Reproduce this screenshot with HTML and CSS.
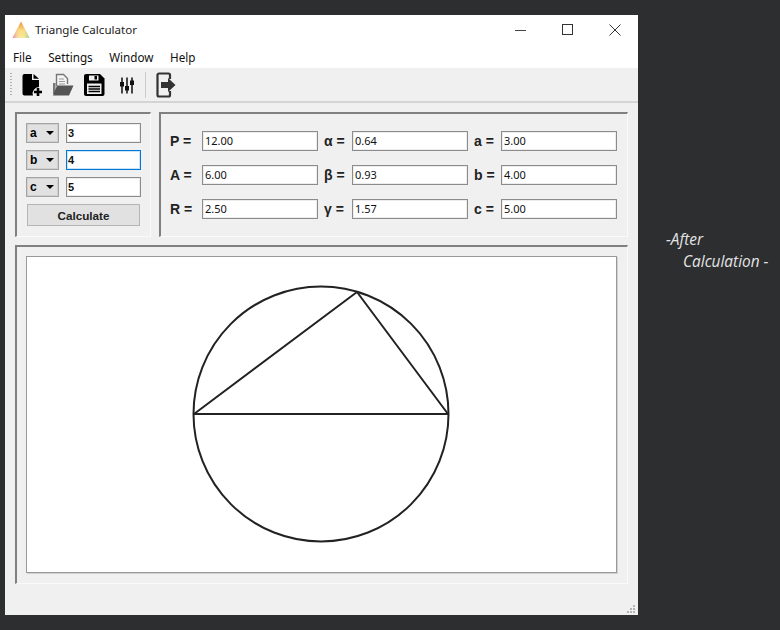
FILE: index.html
```html
<!DOCTYPE html>
<html>
<head>
<title>Triangle Calculator</title>
<meta charset="utf-8">
<link rel="stylesheet" href="styles.css">
</head>
<body>

<div class="window">

    <div class="titlebar">
        <svg class="logo" width="18" height="18" viewBox="0 0 18 18">
            <defs>
                <linearGradient id="logoA" x1="0" y1="0" x2="0" y2="1">
                    <stop offset="0" stop-color="#e8903c"/>
                    <stop offset="0.55" stop-color="#fbdc80"/>
                    <stop offset="1" stop-color="#fbe8a0"/>
                </linearGradient>
                <linearGradient id="logoB" x1="0" y1="0" x2="1" y2="0">
                    <stop offset="0" stop-color="#e070c8" stop-opacity="0.9"/>
                    <stop offset="0.45" stop-color="#fbdc80" stop-opacity="0"/>
                    <stop offset="0.6" stop-color="#fbdc80" stop-opacity="0"/>
                    <stop offset="1" stop-color="#70d0a0" stop-opacity="0.9"/>
                </linearGradient>
            </defs>
            <polygon points="9,0.5 17.5,17 0.5,17" fill="url(#logoA)"/>
            <polygon points="9,0.5 17.5,17 0.5,17" fill="url(#logoB)"/>
        </svg>
        <span class="title">Triangle Calculator</span>
        <div class="winbuttons">
            <svg width="12" height="12" viewBox="0 0 12 12"><path d="M0 6.5H11" stroke="#444" stroke-width="1"/></svg>
            <svg width="12" height="12" viewBox="0 0 12 12"><rect x="0.5" y="0.5" width="10" height="10" fill="none" stroke="#333" stroke-width="1"/></svg>
            <svg width="12" height="12" viewBox="0 0 12 12"><path d="M0.5 0.5L11.5 11.5M11.5 0.5L0.5 11.5" stroke="#333" stroke-width="1"/></svg>
        </div>
    </div>

    <div class="menubar">
        <span>File</span>
        <span>Settings</span>
        <span>Window</span>
        <span>Help</span>
    </div>

    <div class="toolbar">
        <div class="grip"></div>
        <svg class="tool" width="22" height="24" viewBox="0 0 22 24">
            <path d="M3.5 1H11V7H18V14A6.5 6.5 0 0 0 12 22.5H3.5A2 2 0 0 1 1.5 20.5V3A2 2 0 0 1 3.5 1Z" fill="#000"/>
            <path d="M12.5 1L18 5.7H12.5Z" fill="#000"/>
            <path d="M17 15V23M13 19H21" stroke="#000" stroke-width="2.6"/>
        </svg>
        <svg class="tool" width="22" height="24" viewBox="0 0 22 24">
            <path d="M4.5 13V1.5H11.5L15.5 5.5V11" fill="#f4f4f4" stroke="#777" stroke-width="1.4"/>
            <path d="M7 6H12M7 8.5H13M7 11H13" stroke="#999" stroke-width="1"/>
            <path d="M1 10H3.5V21H1Z" fill="#777"/>
            <path d="M5 12.5H21.5L17 22.5H1Z" fill="#555"/>
        </svg>
        <svg class="tool" width="22" height="24" viewBox="0 0 22 24">
            <path d="M1 3A2 2 0 0 1 3 1H17L21.5 5.5V21A2 2 0 0 1 19.5 23H3A2 2 0 0 1 1 21Z" fill="#000"/>
            <rect x="6" y="2.5" width="9.5" height="5" fill="#f0f0f0"/>
            <rect x="11.5" y="3" width="2.5" height="3.5" fill="#000"/>
            <rect x="4" y="10.5" width="14.5" height="10.5" fill="#f0f0f0"/>
            <path d="M5.5 13.5H17M5.5 16H17M5.5 18.5H17" stroke="#000" stroke-width="1.4"/>
        </svg>
        <svg class="tool sliders" width="16" height="24" viewBox="0 0 16 24">
            <path d="M3 4.5V20.5M8 4.5V20.5M13 4.5V20.5" stroke="#333" stroke-width="1.8"/>
            <path d="M1 9H5V13.5H1ZM6 13H10V17.5H6ZM11 7.5H15V12H11Z" fill="#111"/>
        </svg>
        <div class="toolsep"></div>
        <svg class="tool" width="23" height="26" viewBox="0 0 23 26">
            <path d="M15 7V3A1.5 1.5 0 0 0 13.5 1.5H4A1.5 1.5 0 0 0 2.5 3V23A1.5 1.5 0 0 0 4 24.5H13.5A1.5 1.5 0 0 0 15 23V19" fill="none" stroke="#333" stroke-width="2.2"/>
            <path d="M6 10H13V6L20.5 13L13 20V16H6Z" fill="#333"/>
        </svg>
    </div>

    <div class="content">
        <div class="toprow">
            <div class="group inputs">
                <div class="inputrow">
                    <div class="select"><b>a</b><i class="arrow"></i></div>
                    <div class="field">3</div>
                </div>
                <div class="inputrow">
                    <div class="select"><b>b</b><i class="arrow"></i></div>
                    <div class="field focused">4</div>
                </div>
                <div class="inputrow">
                    <div class="select"><b>c</b><i class="arrow"></i></div>
                    <div class="field">5</div>
                </div>
                <div class="calc">Calculate</div>
            </div>
            <div class="group results">
                <span class="lbl">P =</span><div class="field out">12.00</div>
                <span class="lbl">α =</span><div class="field out">0.64</div>
                <span class="lbl">a =</span><div class="field out">3.00</div>
                <span class="lbl">A =</span><div class="field out">6.00</div>
                <span class="lbl">β =</span><div class="field out">0.93</div>
                <span class="lbl">b =</span><div class="field out">4.00</div>
                <span class="lbl">R =</span><div class="field out">2.50</div>
                <span class="lbl">γ =</span><div class="field out">1.57</div>
                <span class="lbl">c =</span><div class="field out">5.00</div>
            </div>
        </div>
        <div class="group drawing">
            <div class="canvas">
                <svg width="589" height="315" viewBox="27 257 589 315">
                    <circle cx="321" cy="414" r="127.5" fill="none" stroke="#222" stroke-width="2"/>
                    <path d="M194 414H448L357 292Z" fill="none" stroke="#222" stroke-width="2" stroke-linejoin="round"/>
                </svg>
            </div>
        </div>
    </div>

    <div class="statusbar">
        <svg width="8" height="8" viewBox="0 0 8 8" fill="#b4b4b4">
            <rect x="6" y="0" width="2" height="2"/>
            <rect x="3" y="3" width="2" height="2"/>
            <rect x="6" y="3" width="2" height="2"/>
            <rect x="0" y="6" width="2" height="2"/>
            <rect x="3" y="6" width="2" height="2"/>
            <rect x="6" y="6" width="2" height="2"/>
        </svg>
    </div>
</div>

<div class="note">
    <div>-After</div>
    <div class="note2">Calculation -</div>
</div>

</body>
</html>
```

FILE: styles.css
```css
html, body {
    margin: 0;
    height: 100%;
}

body {
    background-color: #2d2e30;
    display: flex;
    padding: 15px 0 0 5px;
    box-sizing: border-box;
    height: 630px;
    overflow: hidden;
    font-family: "Noto Sans", "Open Sans", sans-serif;
}

.window {
    width: 633px;
    height: 600px;
    flex: none;
    background-color: #f0f0f0;
    display: flex;
    flex-direction: column;
}

.titlebar {
    height: 30px;
    background-color: white;
    display: flex;
    align-items: center;
    padding-left: 7px;
    font-size: 11.6px;
    color: #222;
}

.logo {
    margin-right: 5px;
}

.title {
    flex: 1;
    margin-top: -1px;
}

.winbuttons {
    display: flex;
    gap: 35px;
    padding-right: 17px;
}

.menubar {
    height: 23px;
    background-color: white;
    display: flex;
    align-items: center;
    gap: 16.5px;
    padding-left: 8px;
    font-size: 11.7px;
    color: #111;
}

.toolbar {
    height: 33px;
    border-bottom: 2px solid #d4d4d4;
    display: flex;
    align-items: center;
    padding-left: 5px;
}

.grip {
    width: 2px;
    height: 24px;
    margin-right: 9px;
    background-image: repeating-linear-gradient(#b0b0b0 0 1px, transparent 1px 3px);
}

.tool {
    margin-right: 9px;
}

.sliders {
    margin-left: 5px;
}

.toolsep {
    width: 1px;
    height: 26px;
    background-color: #ccc;
    margin: 0 9px 0 1px;
}

.content {
    flex: 1;
    padding: 9px 10px 0 10px;
    display: flex;
    flex-direction: column;
    gap: 8px;
}

.toprow {
    display: flex;
    gap: 8px;
}

.group {
    box-sizing: border-box;
    border-top: 2px solid #808080;
    border-left: 2px solid #808080;
    border-right: 1px solid #fafafa;
    border-bottom: 1px solid #fafafa;
}

.inputs {
    width: 136px;
    height: 125px;
    padding: 9px 9px 0 9px;
}

.inputrow {
    display: flex;
    gap: 7px;
    margin-bottom: 7px;
    height: 20px;
}

.select {
    width: 33px;
    box-sizing: border-box;
    background-color: #e1e1e1;
    border: 1px solid #a4a4a4;
    box-shadow: inset 0 0 0 1px #d0d0d0;
    display: flex;
    align-items: center;
    justify-content: space-between;
    padding: 0 4px 0 3px;
    font-family: "Liberation Sans", sans-serif;
    font-size: 12px;
}

.arrow {
    width: 0;
    height: 0;
    border-left: 4px solid transparent;
    border-right: 4px solid transparent;
    border-top: 4px solid #000;
}

.field {
    box-sizing: border-box;
    height: 20px;
    background-color: white;
    border: 1px solid #8c8c8c;
    box-shadow: inset 0 0 0 1px #ececec;
    font-family: "Liberation Sans", sans-serif;
    font-size: 11px;
    font-weight: bold;
    line-height: 18px;
    padding-left: 1px;
    color: #111;
}

.inputrow .field {
    width: 75px;
}

.focused {
    border-color: #0078d7;
    box-shadow: inset 0 0 0 1px #cde4f7;
}

.calc {
    width: 113px;
    height: 22px;
    margin: 0 0 0 1px;
    box-sizing: border-box;
    background-color: #e1e1e1;
    border: 1px solid #b5b5b5;
    text-align: center;
    font-family: "Liberation Sans", sans-serif;
    font-weight: bold;
    font-size: 11.7px;
    line-height: 21px;
    color: #222;
}

.results {
    width: 469px;
    height: 125px;
    display: grid;
    grid-template-columns: 26px 116px 22px 116px 21px 116px;
    grid-auto-rows: 20px;
    column-gap: 6px;
    row-gap: 14px;
    padding: 17px 0 0 9px;
}

.lbl {
    font-family: "Liberation Sans", sans-serif;
    font-weight: bold;
    font-size: 14px;
    line-height: 20px;
    color: #222;
    white-space: nowrap;
}

.field.out {
    font-family: "Noto Sans", sans-serif;
    font-size: 11px;
    font-weight: normal;
    padding-left: 2px;
}

.drawing {
    width: 613px;
    height: 339px;
    padding: 9px 9px 0 9px;
}

.canvas {
    box-sizing: border-box;
    width: 591px;
    height: 317px;
    background-color: white;
    border: 1px solid #999;
    box-shadow: 1px 1px 0 #d0d0d0;
}

.canvas svg {
    display: block;
}

.statusbar {
    height: 31px;
    display: flex;
    justify-content: flex-end;
    align-items: flex-end;
    padding: 0 3px 2px 0;
    box-sizing: border-box;
}

.note {
    margin: 214px 0 0 28px;
    color: #e4e4e4;
    font-family: "Open Sans", sans-serif;
    font-style: italic;
    font-size: 15.4px;
    line-height: 22px;
}

.note2 {
    padding-left: 17px;
    white-space: nowrap;
}
```
